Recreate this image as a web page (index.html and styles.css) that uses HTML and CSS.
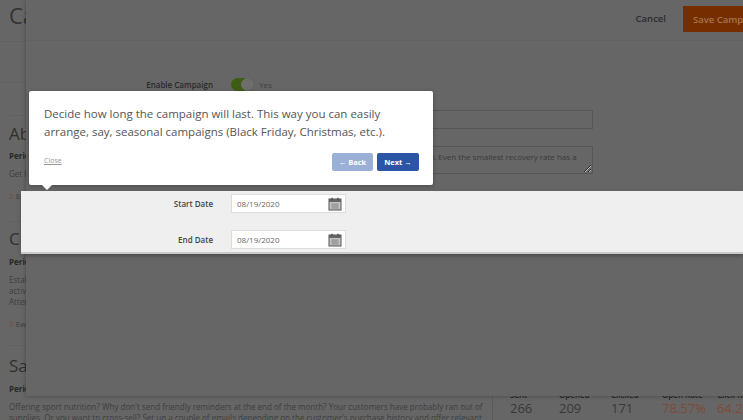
FILE: index.html
```html
<!DOCTYPE html>
<html lang="en">
<head>
<meta charset="utf-8">
<title>Campaign</title>
<link rel="stylesheet" href="styles.css">
</head>
<body>
<main class="page">
  <h1 class="page-title">Campaigns</h1>
  <div class="filter-box"></div>
  <section class="campaign campaign-first">
    <h2>Abandoned Cart</h2>
    <p class="period">Period</p>
    <p class="desc">Get back lost customers.</p>
    <p class="emails"><span class="count">2</span> Emails</p>
  </section>
  <section class="campaign campaign-second">
    <h2>Customer Welcome</h2>
    <p class="period">Period</p>
    <p class="desc">Establish a relationship<br>activity and offers.<br>Attention matters.</p>
    <p class="emails"><span class="count">3</span> Ewails</p>
  </section>
  <section class="campaign campaign-last">
    <div class="campaign-main">
      <h2>Sales Push</h2>
      <p class="period">Period</p>
      <p class="desc">Offering sport nutrition? Why don't send friendly reminders at the end of the month? Your customers have probably ran out of supplies. Or you want to cross-sell? Set up a couple of emails depending on the customer's purchase history and offer relevant</p>
    </div>
    <div class="stats">
      <div class="stat"><span class="stat-label">Sent</span><span class="stat-value">266</span></div>
      <div class="stat"><span class="stat-label">Opened</span><span class="stat-value">209</span></div>
      <div class="stat"><span class="stat-label">Clicked</span><span class="stat-value">171</span></div>
      <div class="stat"><span class="stat-label">Open Rate</span><span class="stat-value stat-hot">78.57%</span></div>
      <div class="stat"><span class="stat-label">Click Rate</span><span class="stat-value stat-hot">64.29%</span></div>
    </div>
  </section>
</main>

<aside class="panel">
  <header class="panel-head">
    <button class="cancel" type="button">Cancel</button>
    <button class="save" type="button">Save Campaign</button>
  </header>
  <form class="form">
    <div class="row row-toggle">
      <span class="label">Enable Campaign</span>
      <span class="toggle"><span class="knob"></span></span>
      <span class="yes">Yes</span>
    </div>
    <div class="row row-name">
      <span class="label">Campaign Name</span>
      <input class="text-input" type="text" value="">
    </div>
    <div class="row row-area">
      <span class="label">Description</span>
      <textarea class="area" rows="2">Get back your customers who left their carts behind. Even the smallest recovery rate has a great impact.</textarea>
    </div>
    <div class="dates">
      <div class="row date-row">
        <span class="label">Start Date</span>
        <span class="date-input">
          <span>08/19/2020</span>
          <svg class="cal" viewBox="0 0 14 14" width="14" height="14" aria-hidden="true"><rect x="1" y="2" width="12" height="11" fill="#c4c4c4" stroke="#555" stroke-width="1"/><rect x="1" y="2" width="12" height="3" fill="#666"/><path d="M4 .8v2.4M10 .8v2.4" stroke="#444" stroke-width="1.2"/><path d="M3 7h8M3 9h8M3 11h8M5 6.5v5M7 6.5v5M9 6.5v5" stroke="#888" stroke-width=".7"/></svg>
        </span>
      </div>
      <div class="row date-row">
        <span class="label">End Date</span>
        <span class="date-input">
          <span>08/19/2020</span>
          <svg class="cal" viewBox="0 0 14 14" width="14" height="14" aria-hidden="true"><rect x="1" y="2" width="12" height="11" fill="#c4c4c4" stroke="#555" stroke-width="1"/><rect x="1" y="2" width="12" height="3" fill="#666"/><path d="M4 .8v2.4M10 .8v2.4" stroke="#444" stroke-width="1.2"/><path d="M3 7h8M3 9h8M3 11h8M5 6.5v5M7 6.5v5M9 6.5v5" stroke="#888" stroke-width=".7"/></svg>
        </span>
      </div>
    </div>
  </form>
</aside>

<div class="tip">
  <p class="tip-text">Decide how long the campaign will last. This way you can easily arrange, say, seasonal campaigns (Black Friday, Christmas, etc.).</p>
  <div class="tip-foot">
    <a class="tip-close" href="#">Close</a>
    <span class="tip-nav">
      <button class="tip-btn tip-back" type="button">← Back</button>
      <button class="tip-btn tip-next" type="button">Next →</button>
    </span>
  </div>
</div>
</body>
</html>
```
FILE: styles.css
```css
* { box-sizing: border-box; }
html, body { height: 100%; }
body {
  margin: 0;
  height: 420px;
  overflow: hidden;
  background: #666;
  color: #3a3a3a;
  font-family: "Open Sans", "Liberation Sans", sans-serif;
  position: relative;
}
p, h1, h2 { margin: 0; }

/* background page, already dimmed */
.page { padding: 0 9px; width: 743px; }
.page-title { font-size: 22px; font-weight: 400; line-height: 30px; color: #333; white-space: nowrap; }
.filter-box { height: 42px; margin: 11px 0 0 -9px; border-top: 1px solid #616161; border-bottom: 1px solid #616161; }
.campaign { border-bottom: 1px solid #616161; }
.campaign-first { margin-top: 32px; height: 107px; border-top: 1px solid #616161; padding-top: 6px; }
.campaign-second { height: 124px; padding-top: 5px; }
.campaign h2 { font-size: 17px; font-weight: 400; line-height: 24px; color: #303030; white-space: nowrap; }
.period { font-size: 8px; font-weight: 700; line-height: 12px; margin-top: 5px; color: #262626; }
.campaign-first .period { margin-top: 4px; }
.desc { font-size: 8.05px; line-height: 11px; margin-top: 6px; color: #3e3e3e; }
.emails { font-size: 8px; line-height: 12px; margin-top: 11px; color: #3e3e3e; }
.count { color: #7f4a38; }
.campaign-last { display: flex; border: 0; padding-top: 8px; }
.campaign-main { width: 475px; flex: none; }
.stats {
  display: grid;
  grid-template-columns: 49px 52px 51px 55px 60px;
  margin-left: 8px;
  padding: 35px 0 0 17px;
  border-left: 1px solid #5a5a5a;
  height: 80px;
  flex: none;
  align-content: start;
}
.stat { display: flex; flex-direction: column; }
.stat-label { font-size: 8px; font-weight: 600; line-height: 12px; color: #262626; white-space: nowrap; }
.stat-value { font-size: 13px; line-height: 14px; color: #383838; white-space: nowrap; }
.stat-hot { color: #7f4a38; }

/* sliding panel */
.panel {
  position: absolute;
  left: 26px;
  top: 0;
  width: 717px;
  height: 396px;
  background: #666;
  box-shadow: 0 0 4px rgba(0,0,0,.3);
}
.panel-head {
  height: 41px;
  display: flex;
  justify-content: flex-end;
  align-items: flex-start;
  border-bottom: 1px solid #626262;
  overflow: hidden;
  padding-top: 6px;
}
.cancel {
  background: none;
  border: 0;
  font: 600 9.5px/26px "Open Sans", sans-serif;
  color: #2c2c2c;
  padding: 0;
  margin-right: 17px;
}
.save {
  flex: none;
  width: 92px;
  height: 26px;
  margin-right: -32px;
  background: #762e00;
  color: #a8744c;
  border: 0;
  font: 600 9.5px "Open Sans", sans-serif;
  text-align: left;
  padding: 0 0 0 10px;
  white-space: nowrap;
}
.form { display: flex; flex-direction: column; }
.row { display: flex; align-items: center; }
.label {
  width: 187px;
  flex: none;
  text-align: right;
  font-size: 8px;
  font-weight: 600;
  color: #2a2a2a;
  margin-right: 18px;
}
.row-toggle { height: 14px; margin-top: 36px; }
.toggle {
  width: 23px;
  height: 13px;
  border-radius: 7px;
  background: #3f5c14;
  position: relative;
}
.knob {
  position: absolute;
  right: 0;
  top: 0;
  width: 13px;
  height: 13px;
  border-radius: 50%;
  background: #6e6e6e;
}
.yes { font-size: 8px; margin-left: 5px; color: #3e3e3e; }
.row-name { margin-top: 19px; }
.text-input { width: 362px; height: 19px; background: #666; border: 1px solid #565656; }
.row-area { margin-top: 17px; align-items: flex-start; }
.area {
  width: 362px;
  height: 28px;
  background: #666;
  border: 1px solid #565656;
  font: 8px/12px "Open Sans", sans-serif;
  color: #3a3a3a;
  padding: 4px 6px 4px 9px;
  display: block;
  overflow: hidden;
}
.dates {
  margin: 17px 0 0 -5px;
  padding: 3px 0 0 5px;
  height: 63px;
  background: #efefef;
  border-bottom: 2px solid #c9c9c9;
  display: flex;
  flex-direction: column;
  gap: 17px;
  box-shadow: 0 2px 4px rgba(0,0,0,.25);
}
.dates .label { color: #444; }
.date-input {
  width: 115px;
  height: 19px;
  background: #fff;
  border: 1px solid #ddd;
  display: flex;
  align-items: center;
  justify-content: space-between;
  padding: 0 3px 0 5px;
  font-size: 8px;
  color: #666;
}
.cal { flex: none; }

/* guide tooltip */
.tip {
  position: absolute;
  left: 29px;
  top: 91px;
  width: 404px;
  height: 94px;
  background: #fff;
  border-radius: 2px;
  padding: 14px 14px 0 15px;
  box-shadow: 0 1px 4px rgba(0,0,0,.3);
}
.tip::after {
  content: "";
  position: absolute;
  left: 13px;
  top: 100%;
  border: 5px solid transparent;
  border-top-color: #fff;
  border-bottom: 0;
}
.tip-text { font-size: 11.5px; line-height: 18px; color: #555; }
.tip-foot { display: flex; justify-content: space-between; align-items: flex-start; margin-top: 12px; }
.tip-close { font-size: 7px; color: #999; margin-top: 3px; }
.tip-nav { display: flex; gap: 4px; }
.tip-btn {
  height: 18px;
  border: 1px solid transparent;
  border-radius: 2px;
  font: 700 7.5px "Open Sans", sans-serif;
  color: #fff;
  padding: 0;
  width: 41px;
}
.tip-back { background: #9ab0d6; }
.tip-next { background: #2c55a6; width: 42px; }
```
